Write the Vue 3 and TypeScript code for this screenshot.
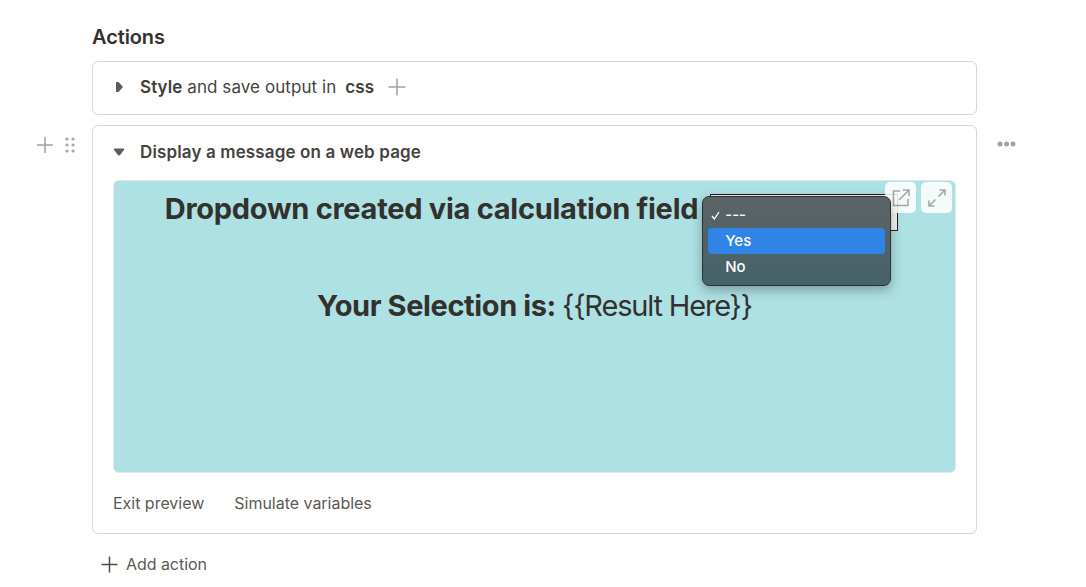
<script setup lang="ts">
const resultText = '{' + '{Result Here}' + '}'
const menuItems = [
  { label: '---', checked: true, active: false },
  { label: 'Yes', checked: false, active: true },
  { label: 'No', checked: false, active: false },
]
</script>

<template>
  <main class="page">
    <h2 class="title">Actions</h2>

    <section class="card collapsed">
      <div class="row">
        <svg class="caret" width="8" height="12" viewBox="0 0 8 12"><path d="M1 1.5 Q1 1 1.6 1 L3 1 Q3.6 1 4 1.5 L7.6 5.4 Q8 6 7.6 6.6 L4 10.5 Q3.6 11 3 11 L1.6 11 Q1 11 1 10.5 Z" fill="#5f5c58"/></svg>
        <span class="label"><b>Style</b> and save output in <b class="var">css</b></span>
        <svg class="plus-inline" width="18" height="18" viewBox="0 0 18 18"><path d="M9 0.5V17.5M0.5 9H17.5" stroke="#a3a19e" stroke-width="1.5"/></svg>
      </div>
    </section>

    <section class="card open">
      <div class="gutter">
        <svg width="16" height="16" viewBox="0 0 16 16"><path d="M8 0V16M0 8H16" stroke="#a3a19e" stroke-width="1.5"/></svg>
        <svg width="10" height="16" viewBox="0 0 10 16" fill="#a8a6a3"><circle cx="2" cy="2" r="1.600"/><circle cx="8" cy="2" r="1.600"/><circle cx="2" cy="8" r="1.600"/><circle cx="8" cy="8" r="1.600"/><circle cx="2" cy="14" r="1.600"/><circle cx="8" cy="14" r="1.600"/></svg>
      </div>
      <svg class="more" width="19" height="6" viewBox="0 0 19 6" fill="#a3a19e"><circle cx="3" cy="3" r="2.500"/><circle cx="9.500" cy="3" r="2.500"/><circle cx="16" cy="3" r="2.500"/></svg>

      <div class="row row-open">
        <svg class="caret" width="12" height="8" viewBox="0 0 12 8"><path d="M1.500 0.500 L10.500 0.500 Q11.800 0.800 11 2 L7 7 Q6 8 5 7 L1 2 Q0.200 0.800 1.500 0.500 Z" fill="#5f5c58"/></svg>
        <span class="label strong">Display a message on a web page</span>
      </div>

      <div class="preview">
        <div class="tools">
          <span class="tool">
            <svg width="18" height="18" viewBox="0 0 18 18" fill="none" stroke="#a8a7a4" stroke-width="1.600"><path d="M8 2H1.500V16.500H16V10"/><path d="M7 11 17 1M11 1H17V7"/></svg>
          </span>
          <span class="tool">
            <svg width="18" height="18" viewBox="0 0 18 18" fill="none" stroke="#a8a7a4" stroke-width="1.600"><path d="M10.500 7.500 17 1M11.500 1H17V6.500M7.500 10.500 1 17M1 11.500V17H6.500"/></svg>
          </span>
        </div>

        <div class="heading-line">
          <h1 class="heading">Dropdown created via calculation field</h1>
          <div class="select-host">
            <div class="select"></div>
            <ul class="menu">
              <li v-for="item in menuItems" :key="item.label" class="menu-item" :class="{ active: item.active }">
                <svg v-if="item.checked" class="check" width="9" height="9" viewBox="0 0 9 9" fill="none" stroke="#fff" stroke-width="1.300"><path d="M1 5 3.300 8 8 1"/></svg>
                {{ item.label }}
              </li>
            </ul>
          </div>
        </div>

        <p class="result"><b>Your Selection is:</b> <span class="placeholder">{{ resultText }}</span></p>
      </div>

      <div class="links">
        <span>Exit preview</span>
        <span>Simulate variables</span>
      </div>
    </section>

    <div class="add">
      <svg width="17" height="17" viewBox="0 0 17 17"><path d="M8.500 0.500V16.500M0.500 8.500H16.500" stroke="#4e4c49" stroke-width="1.500"/></svg>
      <span>Add action</span>
    </div>
  </main>
</template>

<style>
html, body { margin: 0; background: #fff; }
</style>

<style scoped>
.page {
  width: 885px;
  margin-left: 92px;
  padding-top: 26px;
  font-family: Inter, "Liberation Sans", sans-serif;
  color: #37352f;
  box-sizing: border-box;
  height: 587px;
}
.title {
  margin: 0 0 13px;
  font-size: 20px;
  line-height: 22px;
  font-weight: 600;
  color: #33312d;
  letter-spacing: -0.1px;
}
.card {
  position: relative;
  box-sizing: border-box;
  border: 1px solid #d9d8d6;
  border-radius: 6px;
  background: #fff;
}
.collapsed { height: 54px; margin-bottom: 10px; }
.open { height: 409px; padding: 0 20px; }
.row {
  display: flex;
  align-items: center;
  height: 50px;
  padding-left: 22px;
  font-size: 17px;
}
.row-open {
  height: 52px;
  padding-left: 0;
  margin-bottom: 2px;
}
.row-open .caret { margin-right: 15px; }
.collapsed .caret { margin-right: 17px; }
.label { color: #45433f; white-space: nowrap; letter-spacing: 0.08px; }
.label b { font-weight: 600; color: #3f3d39; }
.strong { font-weight: 600; color: #45433f; letter-spacing: 0.13px; }
.var { margin-left: 4px; }
.plus-inline { margin-left: 14px; }
.gutter {
  position: absolute;
  left: -56px;
  top: 11px;
  display: flex;
  gap: 12px;
  align-items: center;
}
.more { position: absolute; right: -40px; top: 15px; }
.preview {
  position: relative;
  height: 293px;
  box-sizing: border-box;
  background: #aee1e4;
  border-radius: 6px;
  border: 1px solid #dfe8e8;
  display: flex;
  flex-direction: column;
  align-items: center;
  padding-top: 10px;
  color: #33312d;
}
.tools {
  position: absolute;
  top: 1px;
  right: 3px;
  display: flex;
  gap: 5px;
  z-index: 2;
}
.tool {
  width: 31px;
  height: 31px;
  border-radius: 5px;
  background: rgba(255, 255, 255, 0.86);
  display: flex;
  align-items: center;
  justify-content: center;
}
.heading-line {
  display: flex;
  align-items: flex-start;
  gap: 12px;
  margin-left: -6px;
}
.heading {
  margin: 0;
  font-size: 29px;
  line-height: 35px;
  font-weight: 700;
  letter-spacing: -0.27px;
  white-space: nowrap;
}
.select-host { position: relative; width: 188px; height: 37px; margin-top: 3px; }
.select {
  box-sizing: border-box;
  width: 100%;
  height: 100%;
  background: #f2f2f2;
  border: 1px solid #1d1d1d;
}
.menu {
  position: absolute;
  z-index: 3;
  left: -8px;
  top: 2px;
  width: 189px;
  height: 90px;
  box-sizing: border-box;
  margin: 0;
  padding: 5px 5px;
  list-style: none;
  border-radius: 7px;
  border: 1px solid #2c3234;
  background: linear-gradient(#5d6365, #44636a);
  box-shadow: 0 4px 12px rgba(0, 0, 0, 0.3);
  color: #fff;
  font-size: 15px;
  font-weight: 500;
}
.menu-item {
  position: relative;
  height: 26px;
  line-height: 26px;
  padding-left: 17px;
  border-radius: 4px;
}
.menu-item.active { background: #2f84e6; }
.check { position: absolute; left: 3px; top: 9px; }
.result {
  margin: 57px 0 0;
  font-size: 29px;
  line-height: 36px;
  white-space: nowrap;
}
.result b { font-weight: 700; letter-spacing: -0.4px; }
.placeholder { letter-spacing: -1.18px; margin-left: -2px; }
.links {
  display: flex;
  gap: 30px;
  margin-top: 19px;
  font-size: 16px;
  line-height: 22px;
  letter-spacing: -0.02px;
  color: #5b5955;
  white-space: nowrap;
}
.add {
  display: flex;
  align-items: center;
  gap: 8px;
  margin-top: 20px;
  margin-left: 9px;
  font-size: 16px;
  line-height: 20px;
  letter-spacing: -0.05px;
  color: #5b5955;
}
</style>
